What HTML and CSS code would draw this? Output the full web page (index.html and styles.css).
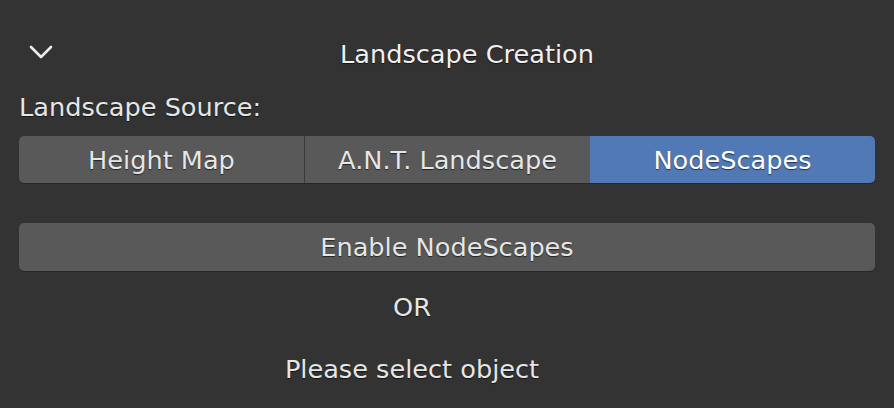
FILE: index.html
```html
<!DOCTYPE html>
<html lang="en">
<head>
  <meta charset="UTF-8">
  <meta name="viewport" content="width=device-width, initial-scale=1.0">
  <title>Landscape Creation</title>
  <link rel="stylesheet" href="styles.css">
</head>
<body>
  <div class="panel">
    <div class="panel-header">
      <svg class="chevron" width="24" height="16" viewBox="0 0 24 16">
        <polyline points="2,3 12,13 22,3" fill="none" stroke="#ececec" stroke-width="2.6" stroke-linecap="round" stroke-linejoin="round" />
      </svg>
      <div class="panel-title">Landscape Creation</div>
    </div>

    <div class="label">Landscape Source:</div>
    <div class="segmented">
      <button class="seg">Height Map</button>
      <button class="seg">A.N.T. Landscape</button>
      <button class="seg active">NodeScapes</button>
    </div>

    <button class="wide-button">Enable NodeScapes</button>

    <div class="note or">OR</div>
    <div class="note select">Please select object</div>
  </div>
</body>
</html>
```

FILE: styles.css
```css
body {
  margin: 0;
  background-color: #333333;
  font-family: "DejaVu Sans", sans-serif;
  font-size: 25.6px;
  color: #e6e6e6;
}
.panel {
  padding: 28px 19px 0 19px;
}
.panel-header {
  position: relative;
  height: 52px;
  line-height: 52px;
}
.chevron {
  position: absolute;
  left: 10px;
  top: 16px;
}
.panel-title {
  text-align: center;
  padding-left: 40px;
  color: #f0f0f0;
  text-shadow: 0 1px 1px rgba(0, 0, 0, 0.6);
}
.label {
  height: 52px;
  line-height: 52px;
  margin-top: 1px;
  text-shadow: 0 1px 1px rgba(0, 0, 0, 0.6);
}
.segmented {
  display: flex;
  margin-top: 3px;
  border-radius: 5px;
  overflow: hidden;
  box-shadow: 0 1px 0 #262626;
}
button {
  font-family: inherit;
  font-size: 25.6px;
  color: #e6e6e6;
  border: none;
  background-color: #595959;
  text-shadow: 0 1px 1px rgba(0, 0, 0, 0.6);
  padding: 0;
  cursor: pointer;
}
.seg {
  flex: 1;
  height: 47px;
  border-left: 1px solid #3a3a3a;
}
.seg:first-child {
  border-left: none;
}
.seg.active {
  background-color: #5179b5;
  color: #ffffff;
  border-left: none;
}
.wide-button {
  display: block;
  width: 100%;
  height: 48px;
  margin-top: 40px;
  border-radius: 5px;
  box-shadow: 0 1px 0 #262626;
}
.note {
  text-align: center;
  padding-right: 70px;
  height: 40px;
  line-height: 40px;
  text-shadow: 0 1px 1px rgba(0, 0, 0, 0.6);
}
.or {
  margin-top: 16px;
}
.select {
  margin-top: 22px;
}
```
